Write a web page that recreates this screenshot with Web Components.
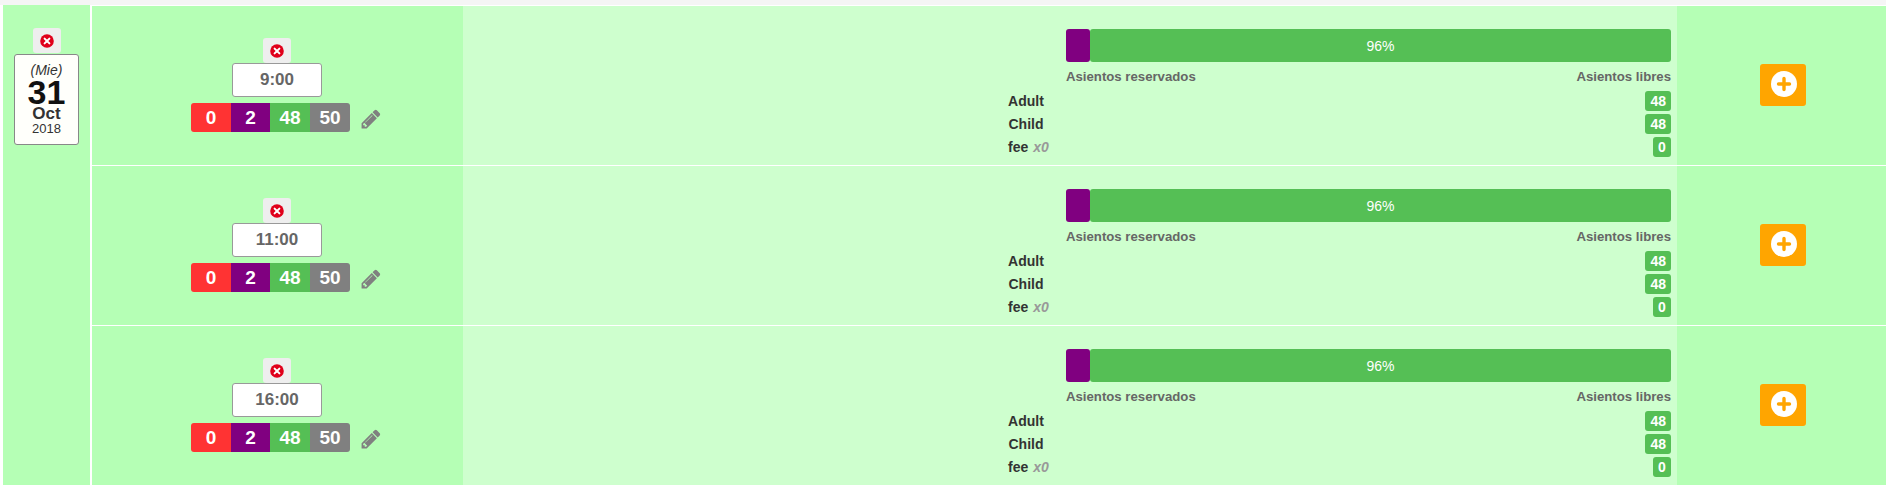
<!DOCTYPE html>
<html>
<head>
<meta charset="utf-8">
<style>
  html, body { margin: 0; padding: 0; background: #fff; }
  body { font-family: "Liberation Sans", Arial, sans-serif; color: #333; }
</style>
</head>
<body>
<seat-day></seat-day>

<script>
'use strict';

(function() {
  const closeIcon = `<svg width="16" height="16" viewBox="0 0 16 16">
    <circle cx="8" cy="8" r="6.8" fill="#e0001b"/>
    <path d="M5.6 5.6l4.8 4.8M10.4 5.6l-4.8 4.8" stroke="#fff" stroke-width="2" stroke-linecap="round" fill="none"/>
  </svg>`

  class CloseButton extends HTMLElement {
    constructor() {
      super()
      const shadow = this.attachShadow({ mode: 'open' })
      shadow.innerHTML = `
        <style>
          :host {
            display: flex;
            align-items: center;
            justify-content: center;
            width: 28px;
            height: 25px;
            background: #eee;
            border-radius: 3px;
          }
          svg { display: block; }
        </style>
        ${closeIcon}
      `
    }
  }

  class DateCard extends HTMLElement {
    constructor() {
      super()
      const shadow = this.attachShadow({ mode: 'open' })
      shadow.innerHTML = `
        <style>
          :host {
            display: flex;
            flex-direction: column;
            align-items: center;
            box-sizing: border-box;
            width: 65px;
            height: 91px;
            margin-top: 1px;
            padding-top: 8px;
            background: #fffffb;
            border: 1px solid #888;
            border-radius: 3px;
            color: #111;
          }
          .week { font-size: 14px; font-style: italic; line-height: 15px; color: #333; }
          .day { font-size: 34px; font-weight: bold; line-height: 29px; }
          .month { font-size: 17px; font-weight: bold; line-height: 14px; color: #333; }
          .year { font-size: 13px; line-height: 16px; color: #333; }
        </style>
        <span class="week">(${this.getAttribute('week')})</span>
        <span class="day">${this.getAttribute('day')}</span>
        <span class="month">${this.getAttribute('month')}</span>
        <span class="year">${this.getAttribute('year')}</span>
      `
    }
  }

  class SeatCounters extends HTMLElement {
    constructor() {
      super()
      const shadow = this.attachShadow({ mode: 'open' })
      shadow.innerHTML = `
        <style>
          :host {
            display: flex;
            align-items: center;
            width: 191px;
            height: 29px;
            margin-left: 19px;
          }
          .counts {
            display: flex;
            flex: none;
            width: 159px;
            height: 29px;
            border-radius: 3px;
            overflow: hidden;
            font-size: 19px;
            font-weight: bold;
            line-height: 29px;
            color: #fff;
            text-align: center;
          }
          .counts span { width: 40px; }
          .counts span:nth-child(2) { width: 39px; }
          .red { background: #f33; }
          .purple { background: #800080; }
          .green { background: #55bf55; }
          .gray { background: #808080; }
          svg { display: block; flex: none; margin: 2px 0 0 10px; }
        </style>
        <div class="counts">
          <span class="red">0</span>
          <span class="purple">2</span>
          <span class="green">48</span>
          <span class="gray">50</span>
        </div>
        <svg width="22" height="22" viewBox="0 0 1792 1792" fill="#808080">
          <path d="M491 1536l91-91-235-235-91 91v107h128v128h107zm523-928q0-22-22-22-10 0-17 7l-542 542q-7 7-7 17 0 22 22 22 10 0 17-7l542-542q7-7 7-17zm-54-192l416 416-832 832h-416v-416zm683 96q0 53-37 90l-166 166-416-416 166-165q36-38 90-38 53 0 91 38l235 234q37 39 37 91z"/>
        </svg>
      `
    }
  }

  class SeatBar extends HTMLElement {
    constructor() {
      super()
      const shadow = this.attachShadow({ mode: 'open' })
      shadow.innerHTML = `
        <style>
          :host { display: block; }
          .bar { display: flex; height: 33px; font-size: 14px; line-height: 35px; color: #fff; text-align: center; }
          .booked { width: 24px; background: #800080; border-radius: 3px; }
          .free { flex: 1; background: #55bf55; border-radius: 3px; }
          .labels {
            display: flex;
            justify-content: space-between;
            margin-top: 7px;
            font-size: 13.2px;
            font-weight: bold;
            line-height: 15px;
            color: #666;
          }
        </style>
        <div class="bar">
          <div class="booked"></div>
          <div class="free">96%</div>
        </div>
        <div class="labels">
          <span>Asientos reservados</span>
          <span>Asientos libres</span>
        </div>
      `
    }
  }

  class FareLine extends HTMLElement {
    constructor() {
      super()
      const shadow = this.attachShadow({ mode: 'open' })
      const qty = this.getAttribute('qty')
      shadow.innerHTML = `
        <style>
          :host {
            display: flex;
            align-items: center;
            height: 20px;
            margin-top: 3px;
            font-size: 14px;
            font-weight: bold;
          }
          .name { width: 66px; margin-left: -66px; padding-right: 14px; box-sizing: border-box; text-align: center; color: #333; white-space: nowrap; }
          .name.with-qty { padding-left: 5px; }
          .qty { margin-left: 5px; font-style: italic; color: #999; }
          .free {
            margin-left: auto;
            min-width: 8px;
            padding: 0 5px;
            height: 20px;
            line-height: 20px;
            background: #55bf55;
            border-radius: 3px;
            color: #fff;
            text-align: center;
          }
        </style>
        <span class="name ${qty ? 'with-qty' : ''}">${this.getAttribute('name')}${qty ? `<span class="qty">${qty}</span>` : ''}</span>
        <span class="free">${this.getAttribute('free')}</span>
      `
    }
  }

  class SeatRow extends HTMLElement {
    constructor() {
      super()
      const shadow = this.attachShadow({ mode: 'open' })
      shadow.innerHTML = `
        <style>
          :host {
            display: flex;
            height: 159px;
          }
          .time {
            display: flex;
            flex-direction: column;
            align-items: center;
            justify-content: center;
            box-sizing: border-box;
            width: 371px;
            padding: 0 1px 1px 0;
            background: #b5ffb5;
          }
          .hour {
            box-sizing: border-box;
            width: 90px;
            height: 34px;
            background: #fff;
            border: 1px solid #999;
            border-radius: 3px;
            font-size: 17px;
            font-weight: bold;
            line-height: 32px;
            text-align: center;
            color: #666;
          }
          seat-counters { margin-top: 6px; }
          .seats {
            flex: 1;
            box-sizing: border-box;
            padding: 23px 6px 0 603px;
            background: #ceffce;
          }
          .action {
            display: flex;
            align-items: center;
            justify-content: center;
            box-sizing: border-box;
            width: 209px;
            padding: 0 0 1px 3px;
            background: #b5ffb5;
          }
          .add {
            display: flex;
            align-items: center;
            justify-content: center;
            width: 46px;
            height: 42px;
            background: #ffa500;
            border-radius: 3px;
          }
          svg { display: block; margin: 0 0 2px 2px; }
        </style>
        <div class="time">
          <close-button></close-button>
          <div class="hour">${this.getAttribute('time')}</div>
          <seat-counters></seat-counters>
        </div>
        <div class="seats">
          <seat-bar></seat-bar>
          <fare-line name="Adult" free="48" style="margin-top:7px"></fare-line>
          <fare-line name="Child" free="48"></fare-line>
          <fare-line name="fee" qty="x0" free="0"></fare-line>
        </div>
        <div class="action">
          <div class="add">
            <svg width="26" height="26" viewBox="0 0 26 26">
              <circle cx="13" cy="13" r="13" fill="#fff"/>
              <path d="M13 7.5v11M7.5 13h11" stroke="#ffa500" stroke-width="3.4" stroke-linecap="round" fill="none"/>
            </svg>
          </div>
        </div>
      `
    }
  }

  class SeatDay extends HTMLElement {
    constructor() {
      super()
      const shadow = this.attachShadow({ mode: 'open' })
      const times = ['9:00', '11:00', '16:00']
      shadow.innerHTML = `
        <style>
          :host {
            display: block;
            width: 1886px;
            padding-top: 5px;
            background: linear-gradient(#f5f5f5 5px, transparent 5px);
          }
          .table { display: flex; margin-left: 3px; height: 480px; }
          .date {
            display: flex;
            flex-direction: column;
            align-items: center;
            box-sizing: border-box;
            width: 87px;
            margin-right: 2px;
            padding-top: 23px;
            background: #b5ffb5;
          }
          .rows {
            flex: 1;
            display: flex;
            flex-direction: column;
            gap: 1px;
            padding-top: 1px;
          }
        </style>
        <div class="table">
          <div class="date">
            <close-button></close-button>
            <date-card week="Mie" day="31" month="Oct" year="2018"></date-card>
          </div>
          <div class="rows">
            ${times.map(time => `<seat-row time="${time}"></seat-row>`).join('')}
          </div>
        </div>
      `
    }
  }

  customElements.define('close-button', CloseButton)
  customElements.define('date-card', DateCard)
  customElements.define('seat-counters', SeatCounters)
  customElements.define('seat-bar', SeatBar)
  customElements.define('fare-line', FareLine)
  customElements.define('seat-row', SeatRow)
  customElements.define('seat-day', SeatDay)
})()
</script>
</body>
</html>
